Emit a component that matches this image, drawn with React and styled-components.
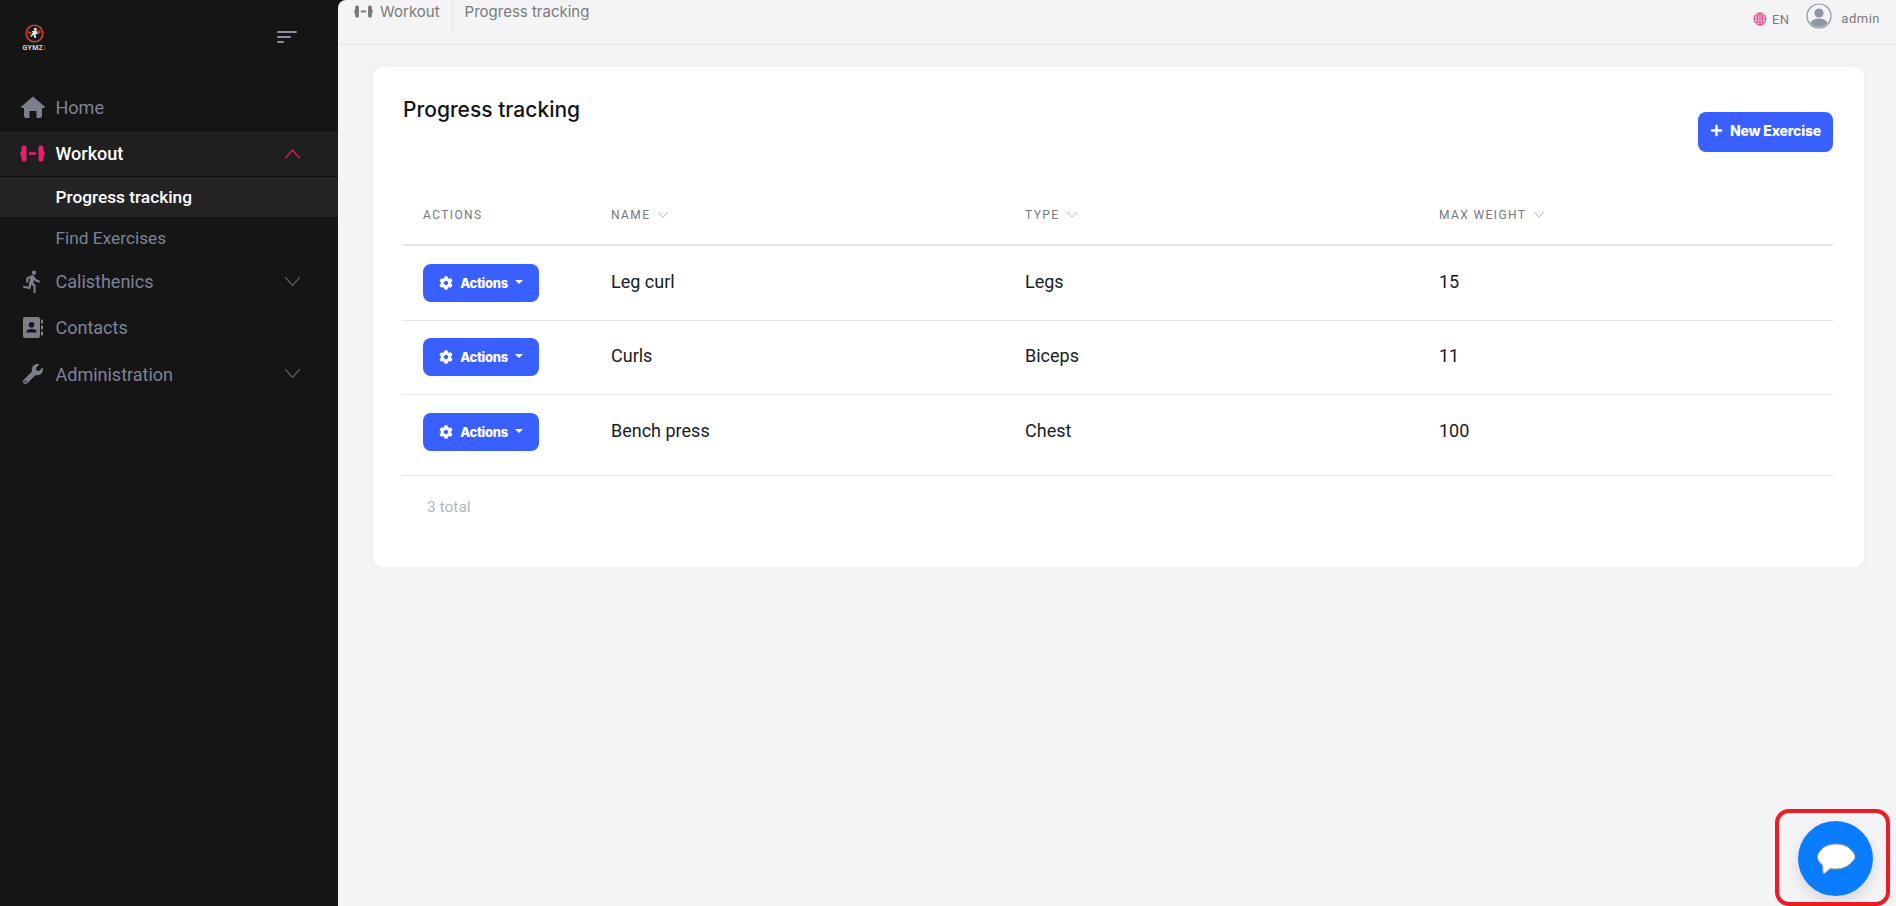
import React from "react";
import styled, { createGlobalStyle } from "styled-components";
import { FaWrench, FaCog, FaPlus } from "react-icons/fa";
import { MdDirectionsRun } from "react-icons/md";

const GlobalStyle = createGlobalStyle`
  html, body {
    margin: 0;
    height: 100%;
    overflow: hidden;
    background: #f4f4f7;
    font-family: Roboto, "Liberation Sans", sans-serif;
  }
  * { box-sizing: border-box; }
`;

const Page = styled.div`
  display: flex;
  width: 1896px;
  height: 906px;
  background: #151515;
`;

const Sidebar = styled.aside`
  width: 338px;
  flex-shrink: 0;
  background: #151515;
  color: #7e8299;
`;

const Brand = styled.div`
  display: flex;
  align-items: flex-start;
  justify-content: space-between;
  height: 83px;
  padding: 23px 41px 0 21px;
`;

const LogoWrap = styled.div`
  display: flex;
  flex-direction: column;
  align-items: center;
  width: 26px;
`;

const LogoText = styled.span`
  font-size: 7px;
  line-height: 7px;
  font-weight: 700;
  color: #d8d8d8;
  letter-spacing: 0.3px;
  margin-top: 1px;
  white-space: nowrap;
`;

const LogoAccent = styled.span`
  color: #a8352a;
`;

const Burger = styled.div`
  display: flex;
  flex-direction: column;
  gap: 3px;
  margin-top: 8px;
  align-items: flex-start;
  width: 20px;
`;

const BurgerLine = styled.span`
  display: block;
  height: 2px;
  border-radius: 1px;
  background: #8b8f9e;
  width: ${(p) => p.$w}px;
`;

const NavItem = styled.div`
  display: flex;
  align-items: center;
  height: ${(p) => p.$h}px;
  padding: 0 36px 0 20px;
  font-size: 18px;
  color: ${(p) => (p.$active ? "#ffffff" : "#7e8299")};
  font-weight: ${(p) => (p.$active ? 500 : 400)};
  background: ${(p) => (p.$active ? "#1f1f1f" : "transparent")};
  border-bottom: ${(p) => (p.$active ? "1px solid #0f0f0f" : "none")};
`;

const NavIcon = styled.span`
  display: flex;
  align-items: center;
  justify-content: center;
  width: 25px;
  margin-right: 10.5px;
  font-size: 20px;
  color: ${(p) => (p.$active ? "#e5206f" : "#7b7f8c")};
`;

const NavLabel = styled.span`
  flex: 1;
`;

const SubItem = styled.div`
  display: flex;
  align-items: center;
  height: ${(p) => p.$h}px;
  padding-left: 55.5px;
  font-size: 17.3px;
  color: ${(p) => (p.$active ? "#ffffff" : "#7e8299")};
  font-weight: ${(p) => (p.$active ? 500 : 400)};
  background: ${(p) => (p.$active ? "#242424" : "transparent")};
`;

const Main = styled.main`
  flex: 1;
  min-width: 0;
  background: #f4f4f7;
  border-top-left-radius: 8px;
`;

const Header = styled.header`
  display: flex;
  justify-content: space-between;
  height: 45px;
  border-bottom: 1px solid #e4e5ea;
  padding: 0 16px;
  color: #7a7a7a;
`;

const Crumbs = styled.div`
  display: flex;
  align-items: flex-start;
  font-family: Inter, sans-serif;
  font-size: 15px;
`;

const Crumb = styled.div`
  display: flex;
  align-items: center;
  gap: 7px;
  height: 32px;
  padding-bottom: 9px;
  padding-right: ${(p) => (p.$first ? "12px" : "0")};
  padding-left: ${(p) => (p.$first ? "0" : "12px")};
  border-right: ${(p) => (p.$first ? "1px solid #e4e5ea" : "none")};
`;

const HeaderRight = styled.div`
  display: flex;
  align-items: flex-start;
  font-size: 13px;
`;

const Lang = styled.div`
  display: flex;
  align-items: center;
  gap: 5px;
  margin-top: 12px;
  height: 14px;
  margin-right: 17px;
  letter-spacing: 0.3px;
`;

const AvatarBox = styled.div`
  margin-top: 3px;
  height: 26px;
`;

const UserName = styled.div`
  margin-top: 12px;
  margin-left: 9px;
  line-height: 14px;
  letter-spacing: 0.5px;
`;

const Content = styled.div`
  padding: 22px 32px 0 35px;
`;

const Card = styled.section`
  height: 500px;
  background: #fff;
  border-radius: 10px;
  padding: 30px 31px 0 30px;
  box-shadow: 0 0 12px rgba(80, 80, 110, 0.03);
`;

const CardTop = styled.div`
  display: flex;
  justify-content: space-between;
  align-items: flex-start;
  height: 89px;
`;

const Title = styled.h2`
  margin: 0;
  font-family: Inter, sans-serif;
  font-size: 21px;
  line-height: 26px;
  font-weight: 550;
  color: #111318;
`;

const PrimaryButton = styled.button`
  display: flex;
  align-items: center;
  justify-content: center;
  border: 0;
  border-radius: 8px;
  background: #3a5fff;
  color: #fff;
  font-family: Inter, sans-serif;
  font-weight: 800;
  font-size: 14px;
  letter-spacing: -0.2px;
`;

const NewButton = styled(PrimaryButton)`
  gap: 7px;
  width: 135px;
  height: 40px;
  margin-top: 15px;
  padding: 0 0 3px;
  svg { font-size: 13px; }
`;

const ActionButton = styled(PrimaryButton)`
  gap: 7px;
  width: 116px;
  height: 38px;
  font-size: 13px;
  letter-spacing: -0.3px;
  svg { font-size: 14px; }
`;

const Caret = styled.span`
  width: 0;
  height: 0;
  border-left: 4px solid transparent;
  border-right: 4px solid transparent;
  border-top: 4px solid #fff;
  margin-bottom: 3px;
`;

const TableRow = styled.div`
  display: grid;
  grid-template-columns: 208px 414px 414px 1fr;
  align-items: center;
  height: ${(p) => p.$h}px;
  padding-bottom: ${(p) => p.$pb || 0}px;
  border-bottom: ${(p) => p.$bw || 1}px solid #e4e5e8;
  font-size: 18px;
  color: #181c24;
`;

const DataCell = styled.div`
  margin-top: -3px;
`;

const HeadCell = styled.div`
  display: flex;
  align-items: center;
  gap: 7px;
  font-size: 12px;
  letter-spacing: 1.4px;
  color: #77787d;
  padding-left: ${(p) => (p.$first ? "20px" : "0")};
`;

const ActionCell = styled.div`
  padding-left: 20px;
  display: flex;
`;

const Total = styled.div`
  margin: 20px 0 0 24px;
  font-size: 15.5px;
  line-height: 22px;
  color: #b5b5b8;
`;

const ChatButton = styled.button`
  position: absolute;
  left: 1798px;
  top: 821px;
  width: 75px;
  height: 75px;
  border: 0;
  border-radius: 50%;
  background: #0a7cff;
  display: flex;
  align-items: center;
  justify-content: center;
  padding: 0;
  box-shadow: 0 6px 14px rgba(0, 0, 0, 0.12);
`;

const Highlight = styled.div`
  position: absolute;
  left: 1775px;
  top: 809px;
  width: 115px;
  height: 97px;
  border: 4px solid #ed1c24;
  border-radius: 14px;
  pointer-events: none;
`;

const Chevron = ({ up, color = "#5f6270", size = 19 }) => (
  <svg width={size} height={size / 2 + 2} viewBox="0 0 18 11" fill="none" stroke={color} strokeWidth="1.2">
    <path d={up ? "M2 10 L9 2 L16 10" : "M2 1 L9 9 L16 1"} />
  </svg>
);

const Logo = () => (
  <svg width="21" height="21" viewBox="0 0 24 24">
    <circle cx="12" cy="12" r="12" fill="#0e1a20" />
    <circle cx="12" cy="12" r="9.5" fill="none" stroke="#d8411d" strokeWidth="1.8" />
    <path d="M4 9 L10 11 L5 13 Z M15 7 L20 10 L16 13 Z" fill="#c93a1a" />
    <path d="M13 5.5 a1.6 1.6 0 1 1 -0.1 0 Z M9 9 L14 8.5 L16 12 L13 13 L14 17 L12 17 L10.5 13.5 L8 16 L7 15 L10 11 Z" fill="#e6e6e6" />
  </svg>
);

const HomeIcon = () => (
  <svg width="24" height="22" viewBox="0 0 24 22" fill="currentColor">
    <path d="M12 0.5 L23.6 10.5 Q24.2 12 23 12 H21 V20 Q21 22 19 22 H15.5 V15 H8.5 V22 H5 Q3 22 3 20 V12 H1 Q-0.2 12 0.4 10.5 Z" />
  </svg>
);

const Dumbbell = ({ width = 25 }) => (
  <svg width={width} height={(width * 17) / 25} viewBox="0 0 25 17" fill="currentColor">
    <path d="M0 8.5 L1.5 5.5 V3 Q1.5 0.5 3.5 0.5 H5 Q6.5 0.5 6.5 3 V14 Q6.5 16.5 5 16.5 H3.5 Q1.5 16.5 1.5 14 V11.5 Z" />
    <rect x="9" y="7.2" width="7" height="2.6" />
    <path d="M25 8.5 L23.5 5.5 V3 Q23.5 0.5 21.5 0.5 H20 Q18.5 0.5 18.5 3 V14 Q18.5 16.5 20 16.5 H21.5 Q23.5 16.5 23.5 14 V11.5 Z" />
  </svg>
);

const ContactsIcon = () => (
  <svg width="20" height="21" viewBox="0 0 20 21" fill="currentColor">
    <path
      fillRule="evenodd"
      d="M2 0 H15 Q17 0 17 2 V19 Q17 21 15 21 H2 Q0 21 0 19 V2 Q0 0 2 0 Z M8.5 5 A2.8 2.8 0 1 0 8.5 10.6 A2.8 2.8 0 1 0 8.5 5 Z M3.5 15.5 H13.5 V14.5 Q13.5 12 8.5 12 Q3.5 12 3.5 14.5 Z"
    />
    <rect x="18" y="2.5" width="2" height="4" rx="0.6" />
    <rect x="18" y="8.5" width="2" height="4" rx="0.6" />
    <rect x="18" y="14.5" width="2" height="4" rx="0.6" />
  </svg>
);

const Globe = () => (
  <svg width="14" height="14" viewBox="0 0 14 14" fill="none" stroke="#f0387f" strokeWidth="1">
    <circle cx="7" cy="7" r="6" />
    <ellipse cx="7" cy="7" rx="2.8" ry="6" />
    <path d="M1 7 H13 M1.8 4 H12.2 M1.8 10 H12.2 M7 1 V13" />
  </svg>
);

const Avatar = () => (
  <svg width="26" height="26" viewBox="0 0 26 26">
    <defs>
      <clipPath id="avatarClip">
        <circle cx="13" cy="13" r="11" />
      </clipPath>
    </defs>
    <circle cx="13" cy="13" r="12" fill="none" stroke="#8f95a3" strokeWidth="1.2" />
    <g clipPath="url(#avatarClip)" fill="#8f95a3">
      <circle cx="13" cy="10" r="4.6" />
      <ellipse cx="13" cy="23" rx="10" ry="7.5" />
    </g>
  </svg>
);

const Bubble = () => (
  <svg width="40" height="32" viewBox="0 0 40 32">
    <path
      d="M20 1 C28 1 33 4 36 8 C38 10 39 12 39 14 C39 16 37 18 35 20 C31 24 26 26 20 26 C18 26 16 26 14.5 25.5 L9 30 C8 31 7 30.5 7 29 L6.5 22 C4.5 20.5 2 18 1.5 15 C1 13 2.5 10 4 8 C7 4 12 1 20 1 Z"
      fill="#fff"
      stroke="#9a9a9a"
      strokeWidth="1"
    />
  </svg>
);

const rows = [
  { name: "Leg curl", type: "Legs", weight: 15, h: 75 },
  { name: "Curls", type: "Biceps", weight: 11, h: 74, pb: 1 },
  { name: "Bench press", type: "Chest", weight: 100, h: 81, pb: 6 },
];

const App = () => (
  <Page>
    <GlobalStyle />
    <Sidebar>
      <Brand>
        <LogoWrap>
          <Logo />
          <LogoText>GYMZ<LogoAccent>I</LogoAccent></LogoText>
        </LogoWrap>
        <Burger>
          <BurgerLine $w={20} />
          <BurgerLine $w={14} />
          <BurgerLine $w={7} />
        </Burger>
      </Brand>
      <NavItem $h={48}>
        <NavIcon><HomeIcon /></NavIcon>
        <NavLabel>Home</NavLabel>
      </NavItem>
      <NavItem $h={46} $active>
        <NavIcon $active><Dumbbell /></NavIcon>
        <NavLabel>Workout</NavLabel>
        <Chevron up color="#e5206f" />
      </NavItem>
      <SubItem $h={40} $active>Progress tracking</SubItem>
      <SubItem $h={42}>Find Exercises</SubItem>
      <NavItem $h={45}>
        <NavIcon><MdDirectionsRun size={25} /></NavIcon>
        <NavLabel>Calisthenics</NavLabel>
        <Chevron />
      </NavItem>
      <NavItem $h={47}>
        <NavIcon><ContactsIcon /></NavIcon>
        <NavLabel>Contacts</NavLabel>
      </NavItem>
      <NavItem $h={46}>
        <NavIcon><FaWrench /></NavIcon>
        <NavLabel>Administration</NavLabel>
        <Chevron />
      </NavItem>
    </Sidebar>
    <Main>
      <Header>
        <Crumbs>
          <Crumb $first><Dumbbell width={19} />Workout</Crumb>
          <Crumb>Progress tracking</Crumb>
        </Crumbs>
        <HeaderRight>
          <Lang><Globe />EN</Lang>
          <AvatarBox><Avatar /></AvatarBox>
          <UserName>admin</UserName>
        </HeaderRight>
      </Header>
      <Content>
        <Card>
          <CardTop>
            <Title>Progress tracking</Title>
            <NewButton><FaPlus />New Exercise</NewButton>
          </CardTop>
          <TableRow $h={60} $bw={2}>
            <HeadCell $first>ACTIONS</HeadCell>
            <HeadCell>NAME <Chevron size={12} color="#a5a6aa" /></HeadCell>
            <HeadCell>TYPE <Chevron size={12} color="#a5a6aa" /></HeadCell>
            <HeadCell>MAX WEIGHT <Chevron size={12} color="#a5a6aa" /></HeadCell>
          </TableRow>
          {rows.map((r) => (
            <TableRow key={r.name} $h={r.h} $pb={r.pb}>
              <ActionCell>
                <ActionButton><FaCog />Actions<Caret /></ActionButton>
              </ActionCell>
              <DataCell>{r.name}</DataCell>
              <DataCell>{r.type}</DataCell>
              <DataCell>{r.weight}</DataCell>
            </TableRow>
          ))}
          <Total>3 total</Total>
        </Card>
      </Content>
    </Main>
    <ChatButton aria-label="chat"><Bubble /></ChatButton>
    <Highlight />
  </Page>
);

export default App;
